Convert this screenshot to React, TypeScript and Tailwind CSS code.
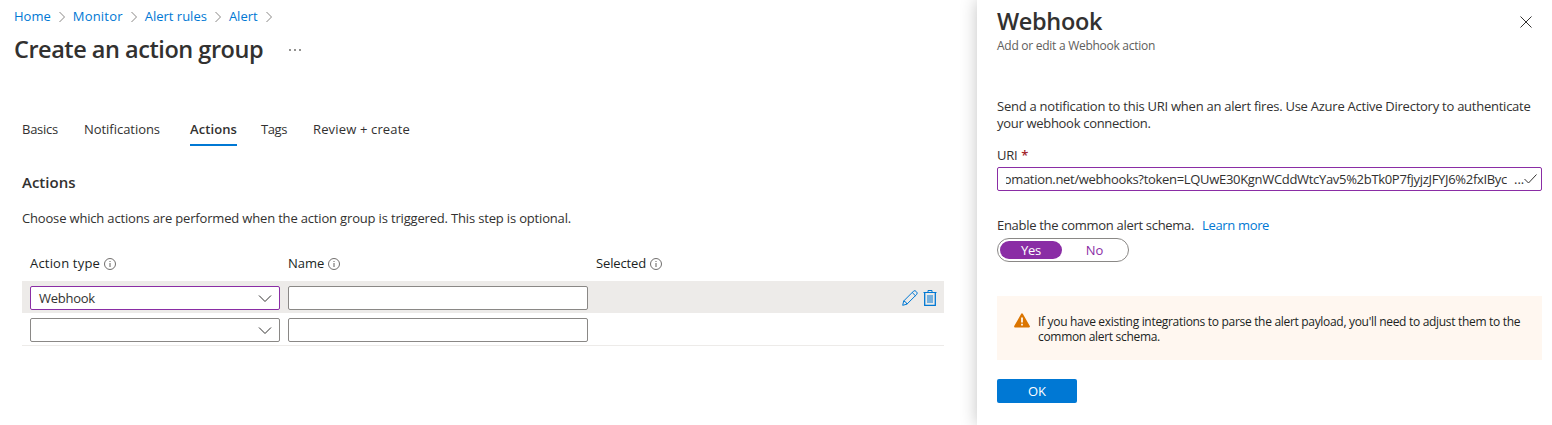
import React from "react";

function Crumb({ className = "", children }: { className?: string; children: React.ReactNode }) {
  return (
    <>
      <a className={className}>{children}</a>
      <svg className="h-3 w-2 shrink-0" viewBox="0 0 8 12" fill="none" stroke="#8a8886">
        <path d="M1.5 1l5 5-5 5" />
      </svg>
    </>
  );
}

function Info() {
  return (
    <svg className="ml-1 h-3 w-3 shrink-0" viewBox="0 0 12 12" fill="none" stroke="#605e5c">
      <circle cx="6" cy="6" r="5.5" strokeWidth="0.9" />
      <path d="M6 5v4M6 3v1" />
    </svg>
  );
}

function Select({ value, active }: { value?: string; active?: boolean }) {
  return (
    <div
      className={`flex h-6 w-[250px] items-center justify-between rounded-[2px] border bg-white pr-[7px] pl-2 ${
        active ? "border-[#8a2da5]" : "border-[#8a8886]"
      }`}
    >
      <span className="tracking-[-0.25px]">{value}</span>
      <svg className="h-[9px] w-[14px]" viewBox="0 0 14 9" fill="none" stroke="#323130">
        <path d="M1 1.5l6 6 6-6" />
      </svg>
    </div>
  );
}

export default function App() {
  return (
    <div className="flex h-[425px] w-[1552px] overflow-hidden bg-white font-['Open_Sans',sans-serif] text-[13px] leading-[17px] text-[#323130]">
      <main className="w-[977px] shrink-0">
        <nav className="mt-2 flex h-[17px] items-center gap-[7px] pl-[14px] text-[#0078d4]">
          <Crumb>Home</Crumb>
          <Crumb className="tracking-[0.2px]">Monitor</Crumb>
          <Crumb>Alert rules</Crumb>
          <Crumb>Alert</Crumb>
        </nav>
        <div className="mt-2 flex h-8 items-center gap-[26px] pl-[14px]">
          <h1 className="text-[23.5px] leading-8 font-semibold tracking-[-0.47px]">Create an action group</h1>
          <svg className="mt-[2px] h-[2px] w-3" viewBox="0 0 12 2" fill="#605e5c">
            <circle cx="1" cy="1" r="0.9" />
            <circle cx="6" cy="1" r="0.9" />
            <circle cx="11" cy="1" r="0.9" />
          </svg>
        </div>
        <div className="mt-14 flex h-[25px] pl-[22px]">
          <div className="w-[62px] tracking-[-0.25px]">Basics</div>
          <div className="w-[106px] tracking-[-0.04px]">Notifications</div>
          <div className="mr-6 w-[47px] border-b-2 border-[#0078d4] font-semibold tracking-[0.1px]">Actions</div>
          <div className="w-[52px] tracking-[-0.4px]">Tags</div>
          <div className="tracking-[0.15px]">Review + create</div>
        </div>
        <h2 className="mt-[27px] pl-[22px] text-[15px] leading-[18px] font-semibold">Actions</h2>
        <p className="mt-[19px] pl-[22px] tracking-[-0.17px]">
          Choose which actions are performed when the action group is triggered. This step is optional.
        </p>
        <div className="mt-7 flex h-[17px] pl-[30px] font-medium text-[#201f1e]">
          <div className="flex w-[258px] items-center tracking-[0.19px]">Action type<Info /></div>
          <div className="flex w-[308px] items-center">Name<Info /></div>
          <div className="flex items-center tracking-[-0.14px]">Selected<Info /></div>
        </div>
        <div className="mt-[9px] ml-[22px] w-[922px] border-b border-[#edebe9]">
          <div className="flex h-8 gap-2 bg-[#edebe9] pt-[5px] pr-[7px] pl-2">
            <Select value="Webhook" active />
            <input className="h-6 w-[300px] rounded-[2px] border border-[#8a8886] bg-white" />
            <div className="mt-[4px] ml-auto flex h-4 gap-[5px]">
              <svg className="h-4 w-4" viewBox="0 0 16 16" fill="none" stroke="#0078d4">
                <path d="M.7 15.3l1-4.3L11.6 1.1q1.4-1.2 2.7.5q1.6 1.3.5 2.7L4.9 14.2zM10.2 2.5l3.300 3.300M1.700 11q2.500.5 3.200 3.200" />
              </svg>
              <svg className="h-4 w-[14px]" viewBox="0 0 14 16" fill="none" stroke="#0078d4">
                <path d="M.5 2.500h13M5 2.500v-2h4v2" />
                <path d="M1.700 3v12.500h10.600V3" strokeWidth="1.300" />
                <path d="M4 5h6v8H4z" fill="#0078d4" fillOpacity=".5" stroke="none" />
              </svg>
            </div>
          </div>
          <div className="flex h-8 gap-2 pt-[5px] pl-2">
            <Select />
            <input className="h-6 w-[300px] rounded-[2px] border border-[#8a8886] bg-white" />
          </div>
        </div>
      </main>

      <aside className="w-[575px] shrink-0 bg-white pr-[10px] pl-5 shadow-[0_0_16px_rgba(0,0,0,0.24)]">
        <header className="flex h-[54px] justify-between pt-[5px] pr-[10px]">
          <div>
            <h1 className="text-[23.5px] leading-8 font-semibold tracking-[-0.35px]">Webhook</h1>
            <p className="mt-px text-xs leading-4 tracking-[-0.27px] text-[#605e5c]">Add or edit a Webhook action</p>
          </div>
          <svg className="mt-[11px] h-3 w-3" viewBox="0 0 12 12" fill="none" stroke="#323130">
            <path d="M.5.5l11 11M11.500.5l-11 11" />
          </svg>
        </header>
        <p className="mt-11 tracking-[-0.25px] whitespace-nowrap">
          Send a notification to this URI when an alert fires. Use Azure Active Directory to authenticate
          <br />
          <span className="tracking-[-0.3px]">your webhook connection.</span>
        </p>
        <div className="mt-[15px] flex gap-[4px] tracking-[-0.3px]">
          URI <span className="font-semibold text-[#a4262c]">*</span>
        </div>
        <div className="mt-[3px] flex h-6 w-[545px] items-center rounded-[2px] border border-[#8a2da5] pr-[5px] pl-2">
          <div className="flex w-[501px] shrink-0 justify-end overflow-hidden whitespace-nowrap tracking-[-0.31px]">
            omation.net/webhooks?token=LQUwE30KgnWCddWtcYav5%2bTk0P7fjyjzJFYJ6%2fxIByc
          </div>
          <span className="ml-[7px]">...</span>
          <svg className="ml-auto h-[10px] w-[13px] shrink-0" viewBox="0 0 13 10" fill="none" stroke="#323130">
            <path d="M.5 5l4 4 8-8.500" />
          </svg>
        </div>
        <div className="mt-[26px] flex gap-2 tracking-[-0.3px]">
          Enable the common alert schema.
          <a className="tracking-[-0.35px] text-[#0078d4]">Learn more</a>
        </div>
        <div className="mt-1 flex h-6 w-[132px] items-center rounded-full border border-[#8a8886] px-[2px] text-center">
          <div className="h-[18px] w-[62px] rounded-full bg-[#8a2da5] leading-[18px] tracking-[-0.3px] text-white">Yes</div>
          <div className="flex-1 pl-px text-[#8a2da5]">No</div>
        </div>
        <div className="mt-[34px] flex h-16 bg-[#fff7f0] pt-[17px] pl-[17px] text-xs leading-[15px] text-[#201f1e]">
          <svg className="mr-2 h-[15px] w-4" viewBox="0 0 16 15">
            <path d="M8 1.200l7 12.300H1z" fill="#db7500" stroke="#db7500" strokeWidth="1.800" strokeLinejoin="round" />
            <path d="M8 4.500v5M8 10.700v1.800" stroke="#fff" strokeWidth="1.700" />
          </svg>
          <p className="mt-px tracking-[-0.31px] whitespace-nowrap">
            If you have existing integrations to parse the alert payload, you'll need to adjust them to the
            <br />
            common alert schema.
          </p>
        </div>
        <button className="mt-[19px] h-6 w-20 rounded-[2px] bg-[#0078d4] font-medium text-white">OK</button>
      </aside>
    </div>
  );
}
